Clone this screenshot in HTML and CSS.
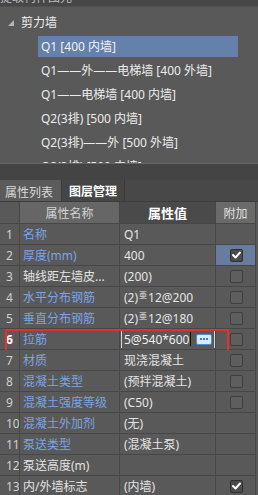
FILE: index.html
```html
<!DOCTYPE html>
<html>
<head>
<meta charset="utf-8">
<link rel="stylesheet" href="styles.css">
</head>
<body>
<div class="app">
  <div class="topbar"><span>提取构件图元</span></div>
  <div class="tree">
    <div class="root"><svg class="tri" width="6" height="6" viewBox="0 0 6 6"><polygon points="6,0 6,6 0,6"/></svg><span>剪力墙</span></div>
    <div class="item"><span class="sel">Q1 [400 内墙]</span></div>
    <div class="item"><span>Q1——外——电梯墙 [400 外墙]</span></div>
    <div class="item"><span>Q1——电梯墙 [400 内墙]</span></div>
    <div class="item"><span>Q2(3排) [500 内墙]</span></div>
    <div class="item"><span>Q2(3排)——外 [500 外墙]</span></div>
    <div class="item"><span>Q2(3排) [500 内墙]</span></div>
  </div>
  <div class="split"></div>
  <div class="tabs">
    <div class="tab active">属性列表</div>
    <div class="tab">图层管理</div>
  </div>
  <div class="table">
    <div class="row head">
      <div class="c num"></div>
      <div class="c name">属性名称</div>
      <div class="c val">属性值</div>
      <div class="c ext">附加</div>
    </div>
    <div class="row"><div class="c num">1</div><div class="c name blue">名称</div><div class="c val">Q1</div><div class="c ext"></div></div>
    <div class="row"><div class="c num">2</div><div class="c name blue">厚度(mm)</div><div class="c val">400</div><div class="c ext hl"><span class="cb on"><svg width="9" height="8" viewBox="0 0 9 8"><polyline points="1,4 3.5,6.5 8,1.5"/></svg></span></div></div>
    <div class="row"><div class="c num">3</div><div class="c name">轴线距左墙皮...</div><div class="c val">(200)</div><div class="c ext"><span class="cb"></span></div></div>
    <div class="row"><div class="c num">4</div><div class="c name blue">水平分布钢筋</div><div class="c val">(2)<span class="rb">亜</span>12@200</div><div class="c ext"><span class="cb"></span></div></div>
    <div class="row"><div class="c num">5</div><div class="c name blue">垂直分布钢筋</div><div class="c val">(2)<span class="rb">亜</span>12@180</div><div class="c ext"><span class="cb"></span></div></div>
    <div class="row editing"><div class="c num bold">6</div><div class="c name blue">拉筋</div><div class="c val edit"><div class="editor"><span>5@540*600</span><i class="caret"></i><span class="dots"><i></i><i></i><i></i></span></div></div><div class="c ext"><span class="cb"></span></div></div>
    <div class="row"><div class="c num">7</div><div class="c name blue">材质</div><div class="c val">现浇混凝土</div><div class="c ext"><span class="cb"></span></div></div>
    <div class="row"><div class="c num">8</div><div class="c name blue">混凝土类型</div><div class="c val">(预拌混凝土)</div><div class="c ext"><span class="cb"></span></div></div>
    <div class="row"><div class="c num">9</div><div class="c name blue">混凝土强度等级</div><div class="c val">(C50)</div><div class="c ext"><span class="cb"></span></div></div>
    <div class="row"><div class="c num">10</div><div class="c name blue">混凝土外加剂</div><div class="c val">(无)</div><div class="c ext"></div></div>
    <div class="row"><div class="c num">11</div><div class="c name blue">泵送类型</div><div class="c val">(混凝土泵)</div><div class="c ext"></div></div>
    <div class="row"><div class="c num">12</div><div class="c name">泵送高度(m)</div><div class="c val"></div><div class="c ext"></div></div>
    <div class="row"><div class="c num">13</div><div class="c name">内/外墙标志</div><div class="c val">(内墙)</div><div class="c ext"><span class="cb on"><svg width="9" height="8" viewBox="0 0 9 8"><polyline points="1,4 3.5,6.5 8,1.5"/></svg></span></div></div>
  </div>
</div>
</body>
</html>
```

FILE: styles.css
```css
* { box-sizing: border-box; }
html, body { margin: 0; padding: 0; }
body {
  width: 258px;
  height: 495px;
  overflow: hidden;
  background: #595959;
  font-family: "Noto Sans", "Noto Sans CJK SC", sans-serif;
  font-size: 12px;
  color: #e4e4e4;
}
.app { width: 258px; height: 495px; overflow: hidden; display: flex; flex-direction: column; }
.topbar {
  height: 7px;
  flex: none;
  background: #474747;
  border-bottom: 1px solid #505050;
  overflow: hidden;
  color: #bdbdbd;
}
.topbar span { display: block; margin-top: -9px; line-height: 14px; }
.tree {
  height: 156px;
  flex: none;
  overflow: hidden;
  padding-top: 3px;
}
.root {
  height: 24px;
  display: flex;
  align-items: center;
  padding-left: 8px;
  gap: 7px;
  color: #ececec;
}
.tri { fill: #b5b5b5; margin-top: 1px; }
.item {
  height: 24px;
  padding-left: 38px;
  display: flex;
  align-items: center;
  color: #ececec;
}
.item span { display: block; padding-left: 3px; line-height: 21px; white-space: nowrap; }
.item .sel { width: 200px; background: #6580aa; color: #f2f2f2; }
.split {
  height: 17px;
  flex: none;
  background: #444444;
  border-top: 1px solid #656565;
}
.tabs {
  height: 22px;
  flex: none;
  display: flex;
  background: #484848;
  border-bottom: 1px solid #3c3c3c;
}
.tab {
  height: 21px;
  display: flex;
  align-items: center;
  padding: 0 7px;
  color: #ffffff;
  font-weight: bold;
  background: #464646;
  border-right: 1px solid #3a3a3a;
}
.tab.active {
  width: 62px;
  padding-left: 5px;
  background: #5b5b5b;
  font-weight: normal;
  color: #d8d8d8;
  padding-top: 3px;
}
.table { flex: none; }
.row {
  display: grid;
  grid-template-columns: 20px 100px 96px 40px;
  height: 21px;
  position: relative;
}
.row.head { height: 22px; }
.c {
  border-right: 1px solid #474747;
  border-bottom: 1px solid #474747;
  display: flex;
  align-items: center;
  white-space: nowrap;
  overflow: hidden;
  background: #595959;
}
.c.num { padding-left: 6px; color: #cfcfcf; }
.c.num.bold { font-weight: bold; color: #ffffff; }
.c.name { padding-left: 3px; color: #e2e2e2; }
.c.name.blue { color: #7ba3e6; }
.c.val { padding-left: 4px; color: #e4e4e4; }
.c.ext { justify-content: center; }
.c.ext.hl { background: #687c9e; }
.head .c { justify-content: center; padding-left: 0; }
.head .name { background: #666666; color: #d4d4d4; }
.head .val { background: #4a4a4a; color: #ffffff; font-weight: bold; font-size: 13px; }
.head .ext { background: #6a6a6a; color: #e0e0e0; }
.rb { font-size: 8px; position: relative; top: -3px; margin: 0 1px; }
.cb {
  width: 13px;
  height: 13px;
  border: 1px solid #3e3e3e;
  border-radius: 2px;
  background: #5e5e5e;
  display: flex;
  align-items: center;
  justify-content: center;
  margin-left: 1px;
}
.cb.on { background: #4b4b4b; border-color: #2f2f2f; }
.cb svg polyline { fill: none; stroke: #ffffff; stroke-width: 2; stroke-linecap: round; stroke-linejoin: round; }
.c.edit { padding-left: 1px; }
.editor {
  height: 17px;
  width: 94px;
  border-left: 1px solid #d6d6d6;
  border-right: 1px solid #d6d6d6;
  display: flex;
  align-items: center;
  padding-left: 2px;
  color: #f0f0f0;
}
.caret { display: block; width: 1px; height: 14px; background: #111; margin-left: 1px; }
.dots {
  margin-left: 5px;
  width: 16px;
  height: 11px;
  border: 1px solid #4a8ed6;
  border-radius: 2px;
  background: #dceaf8;
  display: flex;
  justify-content: center;
  align-items: center;
  gap: 1px;
}
.dots i { display: block; width: 2px; height: 2px; background: #3d7fc8; }
.row.editing::after {
  content: "";
  position: absolute;
  left: 5px;
  top: 0;
  width: 220px;
  height: 19px;
  border: 2px solid #e5302e;
}
```
